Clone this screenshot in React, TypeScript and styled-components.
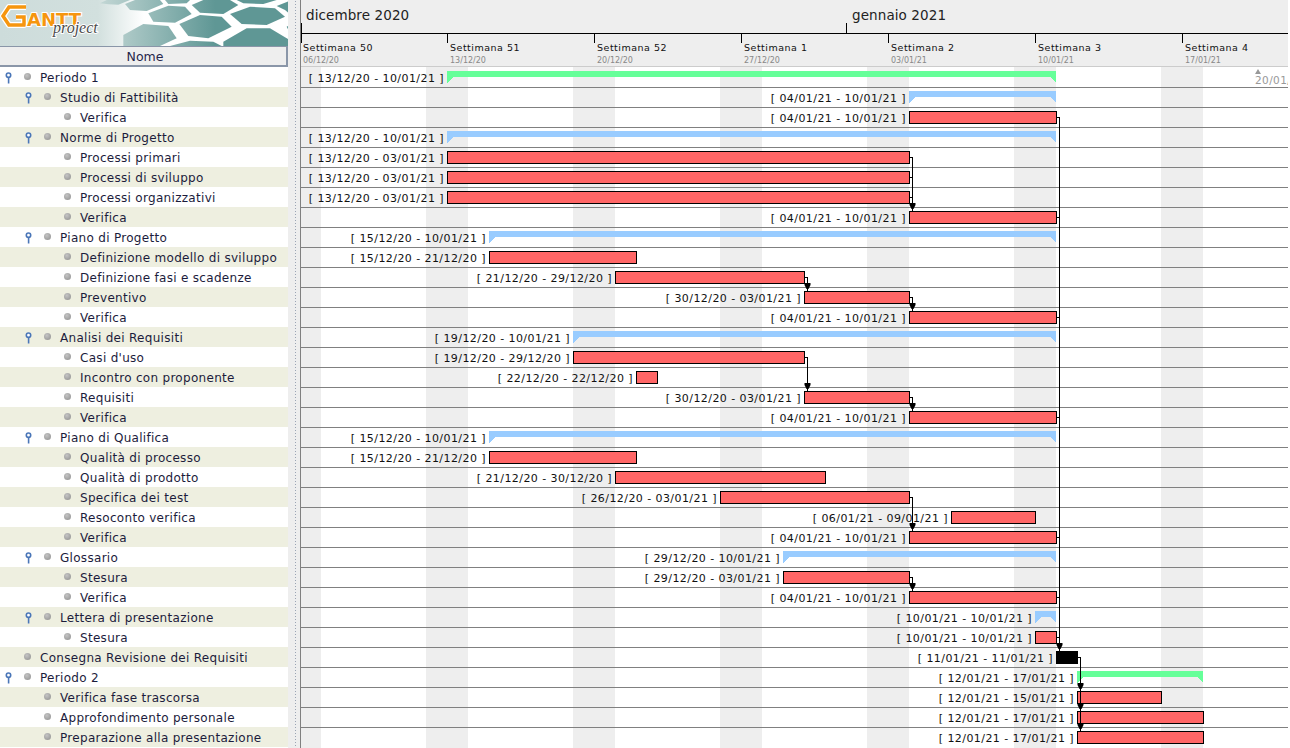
import React from "react";
import styled, { createGlobalStyle } from "styled-components";

const DAY = 21;
const ORIGIN = 301;
const dayX = (n: number) => 300 + n * DAY;

type Kind = "task" | "summary" | "root" | "milestone";
type Row = {
  name: string;
  level: number;
  open?: boolean;
  kind: Kind;
  from: number;
  to: number;
  label: string;
};

const verifica = (level = 2): Row => ({
  name: "Verifica",
  level,
  kind: "task",
  from: 29,
  to: 36,
  label: "[ 04/01/21 - 10/01/21 ]",
});

const ROWS: Row[] = [
  { name: "Periodo 1", level: 0, open: true, kind: "root", from: 7, to: 36, label: "[ 13/12/20 - 10/01/21 ]" },
  { name: "Studio di Fattibilità", level: 1, open: true, kind: "summary", from: 29, to: 36, label: "[ 04/01/21 - 10/01/21 ]" },
  verifica(),
  { name: "Norme di Progetto", level: 1, open: true, kind: "summary", from: 7, to: 36, label: "[ 13/12/20 - 10/01/21 ]" },
  { name: "Processi primari", level: 2, kind: "task", from: 7, to: 29, label: "[ 13/12/20 - 03/01/21 ]" },
  { name: "Processi di sviluppo", level: 2, kind: "task", from: 7, to: 29, label: "[ 13/12/20 - 03/01/21 ]" },
  { name: "Processi organizzativi", level: 2, kind: "task", from: 7, to: 29, label: "[ 13/12/20 - 03/01/21 ]" },
  verifica(),
  { name: "Piano di Progetto", level: 1, open: true, kind: "summary", from: 9, to: 36, label: "[ 15/12/20 - 10/01/21 ]" },
  { name: "Definizione modello di sviluppo", level: 2, kind: "task", from: 9, to: 16, label: "[ 15/12/20 - 21/12/20 ]" },
  { name: "Definizione fasi e scadenze", level: 2, kind: "task", from: 15, to: 24, label: "[ 21/12/20 - 29/12/20 ]" },
  { name: "Preventivo", level: 2, kind: "task", from: 24, to: 29, label: "[ 30/12/20 - 03/01/21 ]" },
  verifica(),
  { name: "Analisi dei Requisiti", level: 1, open: true, kind: "summary", from: 13, to: 36, label: "[ 19/12/20 - 10/01/21 ]" },
  { name: "Casi d'uso", level: 2, kind: "task", from: 13, to: 24, label: "[ 19/12/20 - 29/12/20 ]" },
  { name: "Incontro con proponente", level: 2, kind: "task", from: 16, to: 17, label: "[ 22/12/20 - 22/12/20 ]" },
  { name: "Requisiti", level: 2, kind: "task", from: 24, to: 29, label: "[ 30/12/20 - 03/01/21 ]" },
  verifica(),
  { name: "Piano di Qualifica", level: 1, open: true, kind: "summary", from: 9, to: 36, label: "[ 15/12/20 - 10/01/21 ]" },
  { name: "Qualità di processo", level: 2, kind: "task", from: 9, to: 16, label: "[ 15/12/20 - 21/12/20 ]" },
  { name: "Qualità di prodotto", level: 2, kind: "task", from: 15, to: 25, label: "[ 21/12/20 - 30/12/20 ]" },
  { name: "Specifica dei test", level: 2, kind: "task", from: 20, to: 29, label: "[ 26/12/20 - 03/01/21 ]" },
  { name: "Resoconto verifica", level: 2, kind: "task", from: 31, to: 35, label: "[ 06/01/21 - 09/01/21 ]" },
  verifica(),
  { name: "Glossario", level: 1, open: true, kind: "summary", from: 23, to: 36, label: "[ 29/12/20 - 10/01/21 ]" },
  { name: "Stesura", level: 2, kind: "task", from: 23, to: 29, label: "[ 29/12/20 - 03/01/21 ]" },
  verifica(),
  { name: "Lettera di presentazione", level: 1, open: true, kind: "summary", from: 35, to: 36, label: "[ 10/01/21 - 10/01/21 ]" },
  { name: "Stesura", level: 2, kind: "task", from: 35, to: 36, label: "[ 10/01/21 - 10/01/21 ]" },
  { name: "Consegna Revisione dei Requisiti", level: 0, kind: "milestone", from: 36, to: 37, label: "[ 11/01/21 - 11/01/21 ]" },
  { name: "Periodo 2", level: 0, open: true, kind: "root", from: 37, to: 43, label: "[ 12/01/21 - 17/01/21 ]" },
  { name: "Verifica fase trascorsa", level: 1, kind: "task", from: 37, to: 41, label: "[ 12/01/21 - 15/01/21 ]" },
  { name: "Approfondimento personale", level: 1, kind: "task", from: 37, to: 43, label: "[ 12/01/21 - 17/01/21 ]" },
  { name: "Preparazione alla presentazione", level: 1, kind: "task", from: 37, to: 43, label: "[ 12/01/21 - 17/01/21 ]" },
];

const WEEKS = [
  { name: "Settimana 50", date: "06/12/20" },
  { name: "Settimana 51", date: "13/12/20" },
  { name: "Settimana 52", date: "20/12/20" },
  { name: "Settimana 1", date: "27/12/20" },
  { name: "Settimana 2", date: "03/01/21" },
  { name: "Settimana 3", date: "10/01/21" },
  { name: "Settimana 4", date: "17/01/21" },
];

const WEEKENDS = [-1, 6, 13, 20, 27, 34, 41];

// [source row, target row, x of the vertical run]
const LINKS: [number, number, number][] = [
  [4, 7, 912],
  [5, 7, 912],
  [6, 7, 912],
  [10, 11, 807],
  [11, 12, 912],
  [14, 16, 807],
  [16, 17, 912],
  [21, 23, 912],
  [25, 26, 912],
  [2, 29, 1059],
  [7, 29, 1059],
  [12, 29, 1059],
  [17, 29, 1059],
  [23, 29, 1059],
  [26, 29, 1059],
  [28, 29, 1059],
  [29, 31, 1080],
  [29, 32, 1080],
  [29, 33, 1080],
];

const HEXES = [
  "30,10 50,0 120,0 85,14 55,13",
  "105,12 135,0 210,0 220,12 170,33 120,30",
  "175,40 235,17 285,20 305,42 255,68 190,65",
  "100,105 160,72 235,78 260,115 210,138 100,138",
  "268,72 330,45 395,50 425,80 355,115 295,108",
  "305,15 340,0 420,0 445,15 400,42 330,38",
  "420,42 480,20 555,25 585,50 530,75 455,72",
  "400,125 470,85 540,85 585,112 600,120 600,138 400,138",
  "225,0 300,0 290,10 235,12",
  "440,0 560,0 520,12 460,10",
  "560,18 600,2 600,42 585,30",
  "240,138 300,122 370,125 395,138",
  "590,80 600,75 600,100",
];

const Global = createGlobalStyle`
  html, body { margin: 0; padding: 0; background: #fff; overflow: hidden; }
`;

const Window = styled.div`
  display: flex;
  width: 1290px;
  height: 748px;
  overflow: hidden;
  background: #fff;
`;

const TreePanel = styled.div`
  width: 288px;
  flex: none;
  display: flex;
  flex-direction: column;
`;

const Banner = styled.svg`
  display: block;
  width: 288px;
  height: 46px;
  flex: none;
`;

const ColumnHead = styled.div`
  height: 21px;
  flex: none;
  box-sizing: border-box;
  padding-left: 4px;
  background: #eeeeee;
  border-top: 1px solid #8a96a8;
  border-right: 2px solid #8a96a8;
  border-bottom: 2px solid #8a96a8;
  color: #26264a;
  font: 12.5px "DejaVu Sans", sans-serif;
  line-height: 19px;
  text-align: center;
`;

const TreeRow = styled.div<{ $odd: boolean; $level: number }>`
  height: 20px;
  flex: none;
  box-sizing: border-box;
  display: flex;
  align-items: center;
  padding: 1px 0 0 ${(p) => 5 + p.$level * 20}px;
  background: ${(p) => (p.$odd ? "#eeefe0" : "#ffffff")};
  color: #1c1c3c;
  font: 12px "DejaVu Sans", sans-serif;
  letter-spacing: 0.3px;
  line-height: 18px;
  white-space: nowrap;
`;

const PinSlot = styled.svg`
  width: 7px;
  height: 12px;
  flex: none;
  margin-right: 12px;
`;

const Dot = styled.span`
  width: 7px;
  height: 7px;
  flex: none;
  margin: -3px 9px 0 0;
  border-radius: 50%;
  background: radial-gradient(circle at 40% 35%, #c4c4c4, #8e8e8e);
`;

const Splitter = styled.div`
  width: 12px;
  flex: none;
  background: #eeeeee;
  display: flex;
  justify-content: center;
  &::before {
    content: "";
    width: 3px;
    margin-left: 2px;
    background-image: radial-gradient(circle, #9aa4b4 0.8px, transparent 1px);
    background-size: 3px 3px;
  }
`;

const ChartPanel = styled.div`
  width: 988px;
  flex: none;
  box-sizing: border-box;
  border-left: 1px solid #808080;
  display: flex;
  flex-direction: column;
`;

const Timeline = styled.div`
  position: relative;
  height: 67px;
  flex: none;
  box-sizing: border-box;
  background: #eeeeee;
  border-bottom: 1px solid #cccccc;
`;

const Months = styled.div`
  height: 34px;
  box-sizing: border-box;
  display: flex;
  border-bottom: 1px solid #000;
`;

const Month = styled.div<{ $width: number }>`
  width: ${(p) => p.$width}px;
  flex: none;
  padding: 7px 0 0 5px;
  box-sizing: border-box;
  color: #222;
  font: 13.5px "DejaVu Sans", sans-serif;
  letter-spacing: 0.1px;
  white-space: nowrap;
`;

const Weeks = styled.div`
  display: flex;
`;

const Week = styled.div`
  width: 147px;
  flex: none;
  box-sizing: border-box;
  padding: 8px 0 0 2px;
`;

const WeekName = styled.div`
  color: #111;
  font: 9.5px "DejaVu Sans", sans-serif;
  letter-spacing: 0.5px;
  line-height: 12px;
  white-space: nowrap;
`;

const WeekDate = styled.div`
  margin-top: 1px;
  color: #888;
  font: 8px "DejaVu Sans", sans-serif;
  line-height: 11px;
  white-space: nowrap;
`;

const Tick = styled.i<{ $top: number; $height: number }>`
  position: absolute;
  top: ${(p) => p.$top}px;
  height: ${(p) => p.$height}px;
  width: 1px;
  background: #000;
`;

const Canvas = styled.div`
  position: relative;
  flex: 1;
  overflow: hidden;
  background: #fff;
`;

const Weekend = styled.div`
  position: absolute;
  top: 0;
  bottom: 0;
  width: 42px;
  background: #eeeeee;
`;

const ChartRow = styled.div<{ $first: boolean }>`
  position: relative;
  height: 20px;
  box-sizing: border-box;
  border-top: 1px solid ${(p) => (p.$first ? "transparent" : "#808080")};
`;

const DateLabel = styled.span`
  position: absolute;
  top: 4px;
  transform: translateX(-100%);
  color: #111;
  font: 11px "DejaVu Sans", sans-serif;
  letter-spacing: 0.43px;
  line-height: 14px;
  white-space: pre;
`;

const TaskBar = styled.div<{ $fill: string }>`
  position: absolute;
  top: 3px;
  height: 13px;
  box-sizing: border-box;
  background: ${(p) => p.$fill};
  border: 1px solid #000;
`;

const SummaryBar = styled.svg`
  position: absolute;
  top: 3px;
  height: 13px;
  display: block;
`;

const Overlay = styled.svg`
  position: absolute;
  top: 0;
  left: 0;
  width: 987px;
  height: 681px;
  pointer-events: none;
`;

const TodayMark = styled.div`
  position: absolute;
  top: 2px;
  left: 954px;
  color: #999;
  font: 10.5px "DejaVu Sans", sans-serif;
  letter-spacing: 0.4px;
  white-space: nowrap;
  padding-top: 5px;
  &::before {
    content: "";
    position: absolute;
    top: 0;
    left: 0;
    border: 3px solid transparent;
    border-top: 0;
    border-bottom: 5px solid #999;
  }
`;

function Logo() {
  return (
    <Banner viewBox="0 0 288 46">
      <defs>
        <linearGradient id="ground" x1="0" x2="288" gradientUnits="userSpaceOnUse" y1="0" y2="0">
          <stop offset="0" stopColor="#cddcdb" />
          <stop offset="0.34" stopColor="#d2e0de" />
          <stop offset="0.5" stopColor="#ffffff" />
          <stop offset="1" stopColor="#ffffff" />
        </linearGradient>
        <linearGradient id="cell" x1="90" x2="215" gradientUnits="userSpaceOnUse" y1="0" y2="0">
          <stop offset="0" stopColor="#cbdcda" />
          <stop offset="1" stopColor="#5f9795" />
        </linearGradient>
      </defs>
      <rect width="288" height="46" fill="url(#ground)" />
      <g fill="url(#cell)">
        {HEXES.map((points) => (
          <polygon
            key={points}
            points={points
              .split(" ")
              .map((p) => {
                const [x, y] = p.split(",").map(Number);
                return `${x / 3 + 90},${y / 3}`;
              })
              .join(" ")}
          />
        ))}
      </g>
      <polyline
        points="26,7 9,7 3,16 9,25 24,25 24,17 16,17"
        fill="none"
        stroke="#fff"
        strokeWidth="6"
        strokeLinejoin="round"
      />
      <polyline
        points="26,7 9,7 3,16 9,25 24,25 24,17 16,17"
        fill="none"
        stroke="#f6960f"
        strokeWidth="3.5"
      />
      <text
        x="27"
        y="26"
        fill="#f6960f"
        stroke="#fff"
        strokeWidth="2"
        paintOrder="stroke"
        fontFamily="'DejaVu Sans', sans-serif"
        fontWeight="700"
        fontSize="18"
        textLength="54"
        lengthAdjust="spacingAndGlyphs"
      >
        ANTT
      </text>
      <text
        x="53"
        y="33"
        fill="#4c4c4c"
        stroke="#fff"
        strokeWidth="2"
        paintOrder="stroke"
        fontFamily="'Liberation Serif', serif"
        fontStyle="italic"
        fontSize="16"
      >
        project
      </text>
    </Banner>
  );
}

function Pin() {
  return (
    <PinSlot viewBox="0 0 7 12">
      <circle cx="3.5" cy="3.2" r="2.2" fill="#fff" stroke="#4a76b8" strokeWidth="1.6" />
      <rect x="2.8" y="5" width="1.6" height="6.5" fill="#4a76b8" />
    </PinSlot>
  );
}

function Summary({ left, width, fill }: { left: number; width: number; fill: string }) {
  return (
    <SummaryBar style={{ left, width }} viewBox={`0 0 ${width} 13`}>
      <polygon
        points={`0,0 ${width},0 ${width},12 ${width - 6},6 6,6 0,12`}
        fill={fill}
        shapeRendering="crispEdges"
      />
    </SummaryBar>
  );
}

function Links() {
  const barY = (row: number) => row * 20 + 10;
  return (
    <Overlay>
      <g stroke="#000" strokeWidth="1" shapeRendering="crispEdges" fill="none">
        {LINKS.map(([src, dst, x], i) => {
          const vx = x - ORIGIN + 0.5;
          const sx = dayX(ROWS[src].to) - ORIGIN + 1;
          const sy = barY(src) + 0.5;
          return <path key={i} d={`M${sx} ${sy} H${vx} V${dst * 20 + 4}`} />;
        })}
      </g>
      <g fill="#000">
        {LINKS.map(([, dst, x]) => `${dst}:${x}`)
          .filter((k, i, all) => all.indexOf(k) === i)
          .map((k) => {
            const [dst, x] = k.split(":").map(Number);
            const cx = x - ORIGIN + 0.5;
            const y = dst * 20 - 4;
            return (
              <polygon
                key={k}
                points={`${cx - 3},${y} ${cx + 3},${y} ${cx + 3},${y + 2} ${cx + 1},${y + 6} ${cx - 1},${y + 6} ${cx - 3},${y + 2}`}
              />
            );
          })}
      </g>
    </Overlay>
  );
}

export default function App() {
  return (
    <Window>
      <Global />
      <TreePanel>
        <Logo />
        <ColumnHead>Nome</ColumnHead>
        {ROWS.map((row, i) => (
          <TreeRow key={i} $odd={i % 2 === 1} $level={row.level}>
            {row.open ? <Pin /> : <PinSlot as="span" />}
            <Dot />
            {row.name}
          </TreeRow>
        ))}
      </TreePanel>
      <Splitter />
      <ChartPanel>
        <Timeline>
          <Months>
            <Month $width={546}>dicembre 2020</Month>
            <Month $width={441}>gennaio 2021</Month>
          </Months>
          <Tick $top={23} $height={20} style={{ left: 0 }} />
          <Tick $top={23} $height={10} style={{ left: 545 }} />
          {WEEKS.slice(1).map((_, i) => (
            <Tick key={i} $top={33} $height={10} style={{ left: 146 + i * 147 }} />
          ))}
          <Weeks>
            {WEEKS.map((w) => (
              <Week key={w.name}>
                <WeekName>{w.name}</WeekName>
                <WeekDate>{w.date}</WeekDate>
              </Week>
            ))}
          </Weeks>
        </Timeline>
        <Canvas>
          {WEEKENDS.map((d) => (
            <Weekend key={d} style={{ left: dayX(d) - ORIGIN }} />
          ))}
          {ROWS.map((row, i) => {
            const left = dayX(row.from) - ORIGIN;
            const width = (row.to - row.from) * DAY;
            return (
              <ChartRow key={i} $first={i === 0}>
                <DateLabel style={{ left: left - 3 }}>{row.label}</DateLabel>
                {row.kind === "task" && (
                  <TaskBar $fill="#ff6666" style={{ left, width: width + 1 }} />
                )}
                {row.kind === "milestone" && (
                  <TaskBar $fill="#000000" style={{ left, width: width + 1 }} />
                )}
                {row.kind === "summary" && <Summary left={left} width={width} fill="#99ccff" />}
                {row.kind === "root" && <Summary left={left} width={width} fill="#66ff99" />}
              </ChartRow>
            );
          })}
          <TodayMark>20/01/21</TodayMark>
          <Links />
        </Canvas>
      </ChartPanel>
    </Window>
  );
}
